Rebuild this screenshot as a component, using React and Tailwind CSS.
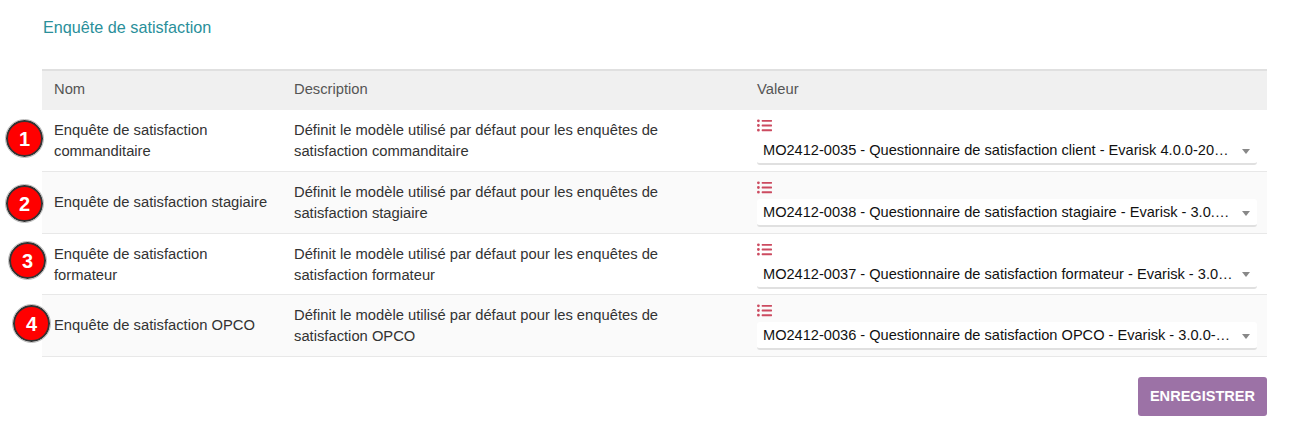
import { FaListUl } from "react-icons/fa";

const rows = [
  {
    n: 1,
    nom: "Enquête de satisfaction commanditaire",
    desc: "Définit le modèle utilisé par défaut pour les enquêtes de satisfaction commanditaire",
    val: "MO2412-0035 - Questionnaire de satisfaction client - Evarisk 4.0.0-2024-12-17",
    badge: "left-[6px] top-[10px]",
    rowClass: "h-[62px] bg-white",
  },
  {
    n: 2,
    nom: "Enquête de satisfaction stagiaire",
    desc: "Définit le modèle utilisé par défaut pour les enquêtes de satisfaction stagiaire",
    val: "MO2412-0038 - Questionnaire de satisfaction stagiaire - Evarisk - 3.0.0-2024-12-17",
    badge: "left-[6px] top-[13px]",
    rowClass: "h-[62px] bg-[#fafafa]",
  },
  {
    n: 3,
    nom: "Enquête de satisfaction formateur",
    desc: "Définit le modèle utilisé par défaut pour les enquêtes de satisfaction formateur",
    val: "MO2412-0037 - Questionnaire de satisfaction formateur - Evarisk - 3.0.0-2024-12-17",
    badge: "left-[9px] top-[8px]",
    rowClass: "h-[61px] bg-white",
    textClass: "pt-px",
  },
  {
    n: 4,
    nom: "Enquête de satisfaction OPCO",
    desc: "Définit le modèle utilisé par défaut pour les enquêtes de satisfaction OPCO",
    val: "MO2412-0036 - Questionnaire de satisfaction OPCO - Evarisk - 3.0.0-2024-12-17",
    badge: "left-[13px] top-[10px]",
    rowClass: "h-[62px] bg-[#fafafa]",
  },
];

function Badge({ n, className }) {
  return (
    <div
      className={`absolute ${className} flex h-[37px] w-[37px] items-center justify-center rounded-full border-2 border-[#333] bg-[#ff0000] outline outline-1 outline-[#bbb] text-[20px] font-bold text-white`}
    >
      {n}
    </div>
  );
}

export default function App() {
  return (
    <div className="relative min-h-[442px] bg-white pl-[42px] pr-[26px] pt-[18px] font-['Liberation_Sans',Arial,sans-serif] text-[14.75px] text-[#333]">
      <div className="ml-[1px] h-[51px] text-[16.2px] leading-[19px] text-[#2a8f9a]">Enquête de satisfaction</div>

      <div className="flex h-[41px] items-center border-t-2 border-[#e0e0e0] bg-[#f0f0f0] pb-[2px] text-[#555]">
        <div className="w-[240px] pl-3">Nom</div>
        <div className="w-[463px] pl-3">Description</div>
        <div className="flex-1 pl-3">Valeur</div>
      </div>

      {rows.map((r) => (
        <div key={r.n} className={`relative flex items-center border-b border-[#e8e8e8] last:border-[#d8d8d8] ${r.rowClass}`}>
          <div className={`w-[240px] pl-3 pr-2 leading-[21px] ${r.textClass || ""}`}>{r.nom}</div>
          <div className={`w-[463px] pl-3 pr-[60px] leading-[21px] ${r.textClass || ""}`}>{r.desc}</div>
          <div className="min-w-0 flex-1 pl-3 pr-[10px] pt-[2px]">
            <FaListUl className="h-[15px] w-[15px] text-[#cc4b60]" />
            <div className="mt-[4px] flex h-[28px] items-center rounded-[3px] border-b-2 border-[#e0e0e0] bg-white pl-[6px] pr-[7px] pt-[2px] text-[14.6px] text-[#111]">
              <span className="min-w-0 flex-1 truncate">{r.val}</span>
              <span className="ml-[9px] h-0 w-0 border-x-[4px] border-t-[5px] border-x-transparent border-t-[#888]" />
            </div>
          </div>
          <div className="absolute left-[-42px] top-0">
            <div className="relative">
              <Badge n={r.n} className={r.badge} />
            </div>
          </div>
        </div>
      ))}

      <div className="mt-[20px] flex justify-end">
        <button className="h-[39px] rounded-[3px] bg-[#9c72a6] px-3 text-[14.55px] font-bold text-white">ENREGISTRER</button>
      </div>
    </div>
  );
}
